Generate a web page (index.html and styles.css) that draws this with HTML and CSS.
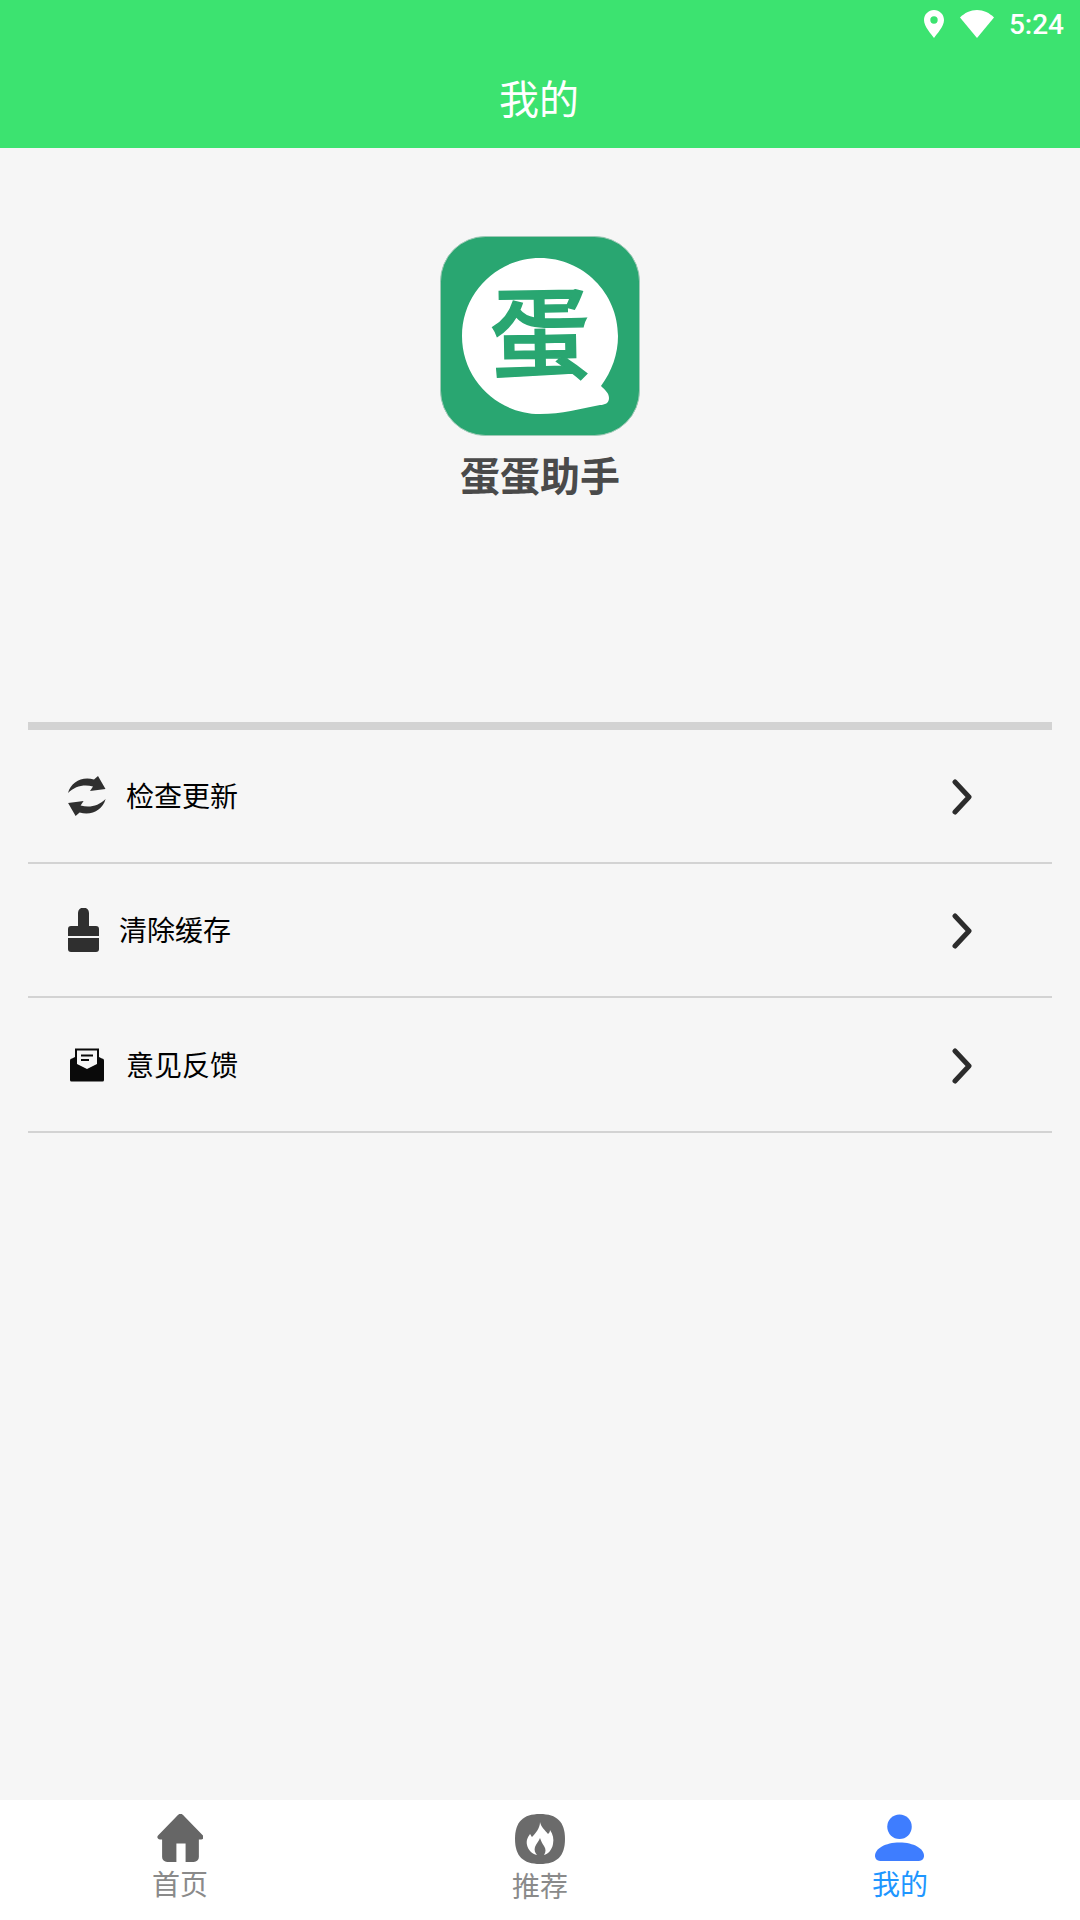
FILE: index.html
```html
<!DOCTYPE html>
<html lang="zh-CN">
<head>
    <meta charset="UTF-8">
    <meta name="viewport" content="width=device-width, initial-scale=1.0">
    <title>我的</title>
    <link rel="stylesheet" href="styles.css">
</head>
<body>
    <header class="topbar">
        <div class="status">
            <svg class="status-pin" viewBox="0 0 20 28">
                <path fill-rule="evenodd" d="M10 0C4.500 0 0 4.400 0 9.900 0 16.500 7 23.500 10 28c3-4.500 10-11.500 10-18.100C20 4.400 15.500 0 10 0zm0 6.300a3.700 3.700 0 1 1 0 7.400 3.700 3.700 0 0 1 0-7.400z"/>
            </svg>
            <svg class="status-wifi" viewBox="0 0 34 28">
                <path d="M17 28L0 7.400C4.500 3 10.500 0 17 0s12.500 3 17 7.400z"/>
            </svg>
            <span class="status-time">5:24</span>
        </div>
        <h1 class="topbar-title">我的</h1>
    </header>

    <main class="content">
        <section class="about">
            <svg class="logo" viewBox="0 0 200 200">
                <rect x="0.500" y="0.500" width="199" height="199" rx="45" fill="#29a671" stroke="#9fc9b6"/>
                <path fill="#fff" d="M100 22c43 0 78 35 78 78 0 18-6 35-17 50 4 4 8 7 8 12 0 5-4 7-9 7-20 4-38 9-60 9-43 0-78-35-78-78s35-78 78-78z"/>
                <text class="logo-glyph" x="100" y="135" transform="rotate(-1 100 100)">蛋</text>
            </svg>
            <h2 class="app-name">蛋蛋助手</h2>
        </section>

        <ul class="menu">
            <li class="menu-row">
                <svg class="menu-icon" viewBox="0 0 38 40">
                    <path fill="#2f2f2f" d="M0 17C3 6 14 0 26 3.500L30 0 37.500 13 22 15 25 10.500C16 8 7 10 0 17z"/>
                    <path fill="#2f2f2f" d="M0 17C3 6 14 0 26 3.500L30 0 37.500 13 22 15 25 10.500C16 8 7 10 0 17z" transform="rotate(180 18.800 20)"/>
                </svg>
                <span class="menu-label">检查更新</span>
                <svg class="chevron" viewBox="0 0 20 36"><path d="M3 3l14 15L3 33"/></svg>
            </li>
            <li class="menu-row">
                <svg class="menu-icon menu-icon-brush" viewBox="0 0 31 44">
                    <path fill="#2f2f2f" d="M10 5a5.500 5.500 0 0 1 11 0v13h7a3 3 0 0 1 3 3v7H0v-7a3 3 0 0 1 3-3h7z"/>
                    <path fill="#2f2f2f" d="M0 30h31v11a3 3 0 0 1-3 3H3a3 3 0 0 1-3-3z"/>
                </svg>
                <span class="menu-label">清除缓存</span>
                <svg class="chevron" viewBox="0 0 20 36"><path d="M3 3l14 15L3 33"/></svg>
            </li>
            <li class="menu-row menu-row-last">
                <svg class="menu-icon" viewBox="0 0 38 38">
                    <path fill="#0a0a0a" d="M7 2.500h24V11l3 1.500a2 2 0 0 1 2 2V34a1.500 1.500 0 0 1-1.500 1.500h-31A1.500 1.500 0 0 1 2 34V14.500a2 2 0 0 1 2-2L7 11z"/>
                    <path fill="#f6f6f6" d="M9 4.500h20v13.500L19 23 9 18z"/>
                    <path stroke="#0a0a0a" stroke-width="1.800" d="M13 9.500h12M13 14h8"/>
                </svg>
                <span class="menu-label">意见反馈</span>
                <svg class="chevron" viewBox="0 0 20 36"><path d="M3 3l14 15L3 33"/></svg>
            </li>
        </ul>
    </main>

    <nav class="tabbar">
        <div class="tab">
            <svg class="tab-icon" viewBox="0 0 46 47">
                <path fill="#666" d="M20.500 1a3.500 3.500 0 0 1 5 0l19.500 20a2.400 2.400 0 0 1-1.700 4H41v17a5 5 0 0 1-5 5h-8V29h-9v18h-9a5 5 0 0 1-5-5V25H2.700A2.400 2.400 0 0 1 1 21z"/>
            </svg>
            <span class="tab-label">首页</span>
        </div>
        <div class="tab">
            <svg class="tab-icon tab-icon-flame" viewBox="0 0 50 50">
                <path fill="#6b6b6b" d="M25 0C42 0 50 8 50 25S42 50 25 50 0 42 0 25 8 0 25 0z"/>
                <path fill="#fff" d="M25 8C26 13 30 16 33 20 34 19 35 18 35 16 38 20 39 25 38 30 37 36 33 40 29 41 31 38 31 35 29 32 27 29 26 27 25 24 24 27 21 30 20 33 19 36 20 39 22 41 17 40 13 36 12 31 11 26 13 23 15 20 16 21 16 22 17 23 21 19 25 14 25 8z"/>
            </svg>
            <span class="tab-label">推荐</span>
        </div>
        <div class="tab tab-active">
            <svg class="tab-icon" viewBox="0 0 48 47">
                <circle fill="#3e7dff" cx="24" cy="12.500" r="12"/>
                <path fill="#3e7dff" d="M24 28c14 0 24 6 24 13 0 3-2 5-5 5H5c-3 0-5-2-5-5 0-7 10-13 24-13z"/>
            </svg>
            <span class="tab-label">我的</span>
        </div>
    </nav>
</body>
</html>
```

FILE: styles.css
```css
* {
    box-sizing: border-box;
}

body {
    display: flex;
    flex-direction: column;
    width: 1080px;
    height: 1920px;
    margin: 0;
    font-family: "Noto Sans CJK SC", "Noto Sans", sans-serif;
    background-color: #f6f6f6;
    color: #000;
    overflow: hidden;
}

.topbar {
    height: 148px;
    background-color: #3ce370;
    color: #fff;
}

.status {
    display: flex;
    justify-content: flex-end;
    align-items: center;
    height: 48px;
    padding-right: 16px;
    fill: #fff;
}

.status-pin {
    width: 20px;
    height: 28px;
    margin-right: 16px;
}

.status-wifi {
    width: 34px;
    height: 28px;
    margin-right: 15px;
}

.status-time {
    font-family: Roboto, sans-serif;
    font-size: 28px;
    font-weight: 500;
}

.topbar-title {
    margin: 22px 0 0;
    padding-right: 2px;
    font-size: 40px;
    font-weight: 400;
    line-height: 54px;
    text-align: center;
}

.content {
    flex: 1;
    padding: 88px 28px 0;
}

.about {
    display: flex;
    flex-direction: column;
    align-items: center;
    height: 494px;
    border-bottom: 8px solid #d3d3d3;
}

.logo {
    width: 200px;
    height: 200px;
}

.logo-glyph {
    font-size: 100px;
    font-weight: 500;
    fill: #29a671;
    stroke: #29a671;
    stroke-width: 1.5;
    text-anchor: middle;
}

.app-name {
    margin: 8px 0 0;
    font-size: 40px;
    font-weight: 700;
    line-height: 60px;
    color: #4a4a4a;
}

.menu {
    margin: 0;
    padding: 0;
    list-style: none;
}

.menu-row {
    display: flex;
    align-items: center;
    height: 134px;
    padding: 0 80px 0 40px;
    border-bottom: 2px solid #d3d3d3;
}

.menu-row-last {
    height: 135px;
}

.menu-icon {
    flex: none;
    width: 38px;
    height: 40px;
    margin-right: 20px;
}

.menu-icon-brush {
    width: 31px;
    height: 44px;
}

.menu-label {
    padding-bottom: 2px;
    font-size: 28px;
    line-height: 40px;
}

.chevron {
    width: 20px;
    height: 36px;
    margin-top: 2px;
    margin-left: auto;
    fill: none;
    stroke: #2c2c2c;
    stroke-width: 5;
    stroke-linecap: round;
    stroke-linejoin: round;
}

.tabbar {
    display: flex;
    height: 120px;
    background-color: #fff;
}

.tab {
    display: flex;
    flex: 1;
    flex-direction: column;
    align-items: center;
    padding-top: 14px;
    color: #8a8a8a;
}

.tab-icon {
    display: block;
    height: 48px;
}

.tab-icon-flame {
    height: 50px;
}

.tab-label {
    margin-top: 1px;
    font-size: 28px;
    line-height: 40px;
}

.tab-active {
    color: #1e96ff;
}
```
